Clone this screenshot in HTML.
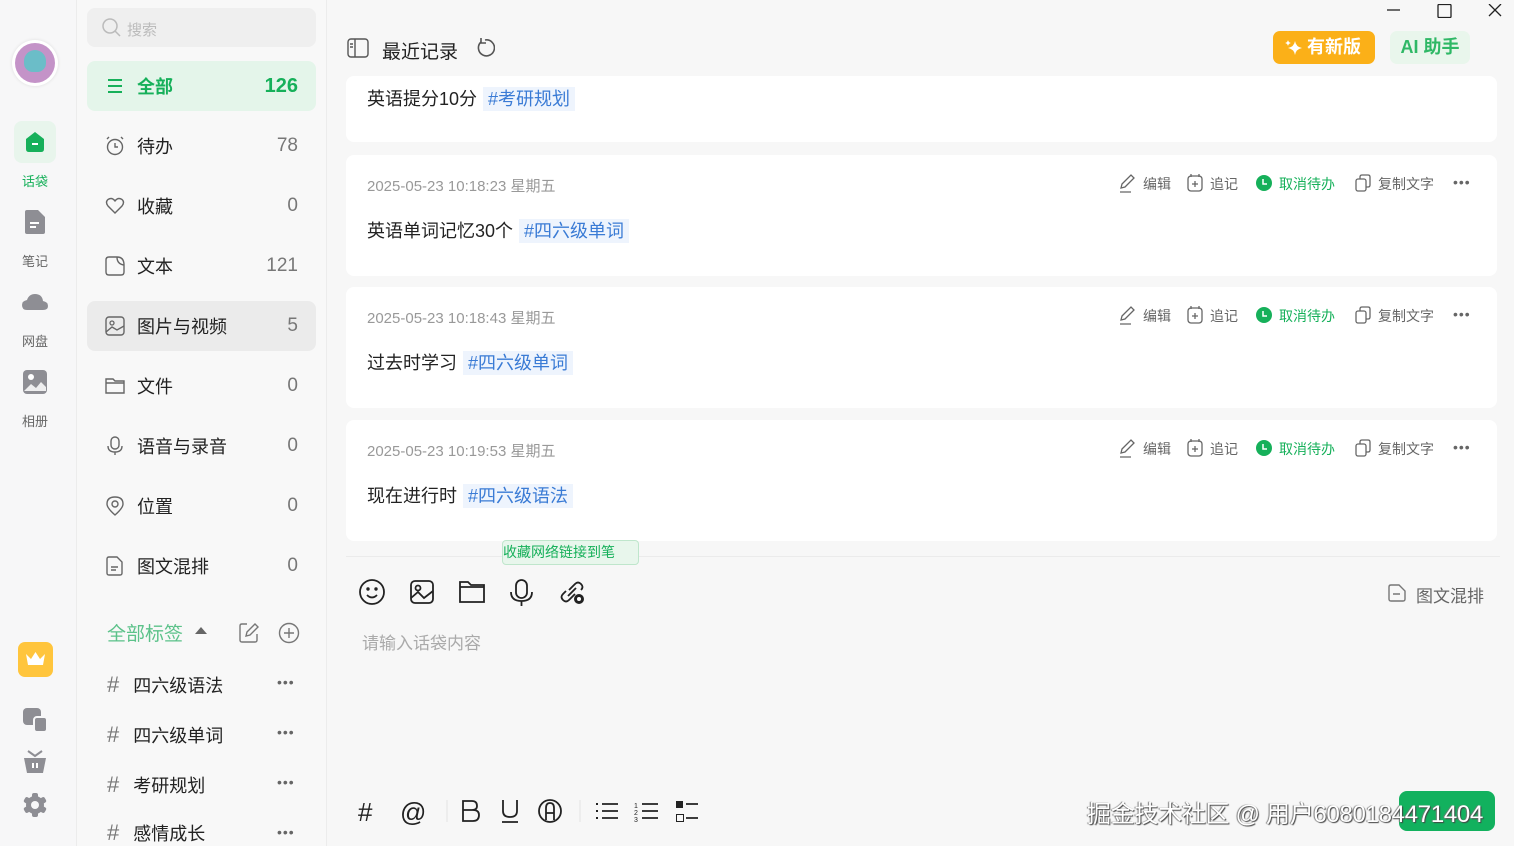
<!DOCTYPE html>
<html><head><meta charset="utf-8">
<style>
*{margin:0;padding:0;box-sizing:border-box}
body{width:1514px;height:846px;overflow:hidden;background:#f7f7f7;font-family:"Liberation Sans","Noto Sans CJK SC",sans-serif;position:relative;color:#222}
.abs{position:absolute}
.rail{left:0;top:0;width:77px;height:846px;background:#f7f7f8;border-right:1px solid #ececec}
.side{left:77px;top:0;width:250px;height:846px;background:#f8f8f8;border-right:1px solid #ececec}
.nav{position:absolute;left:87px;width:229px;height:50px;border-radius:8px;display:flex;align-items:center;padding:0 18px 0 18px;font-size:18px;color:#222}
.nav .ic{width:20px;height:20px;margin-right:12px;color:#555}
.nav .n{margin-left:auto;color:#777;font-size:19px}
.rl{position:absolute;left:0;width:70px;text-align:center;font-size:13px;color:#666}
.tag{position:absolute;left:107px;font-size:18px;color:#222}
.tag b{font-weight:normal;color:#777;font-size:22px;margin-right:14px}
.dots{position:absolute;left:277px;color:#666;font-size:14px;letter-spacing:1px}
.card{position:absolute;left:346px;width:1151px;background:#fff;border-radius:8px}
.date{position:absolute;left:21px;top:20px;font-size:15px;color:#999}
.txt{position:absolute;left:21px;top:62px;font-size:18px;color:#222}
.txt i{font-style:normal;color:#3a7bd5;background:#eef4fd;padding:2px 5px;margin-left:6px}
.tb svg{position:absolute}
.ar{position:absolute;left:1119px;font-size:14px;color:#666;white-space:nowrap}.ar span{position:absolute;top:0}
</style></head><body>
<div class="abs rail"></div>
<div class="abs side"></div>

<div class="abs" style="left:12px;top:40px;width:46px;height:46px;border-radius:50%;background:#fff;box-shadow:0 0 3px #ddd"></div>
<div class="abs" style="left:15px;top:43px;width:40px;height:40px;border-radius:50%;background:#c493c8"></div>
<div class="abs" style="left:24px;top:50px;width:22px;height:22px;border-radius:50% 50% 40% 40%;background:#6bbdc8"></div>

<div class="abs" style="left:14px;top:121px;width:42px;height:42px;border-radius:8px;background:#e8f5ec"></div>
<svg class="abs" style="left:22px;top:129px" width="26" height="26"><path d="M4 10 L13 3 L22 10 V20 Q22 23 19 23 H7 Q4 23 4 20Z" fill="#16b05a"/><rect x="10" y="14" width="6" height="2" fill="#fff"/></svg>
<div class="rl" style="top:171px;color:#16b05a">话袋</div>
<svg class="abs" style="left:24px;top:209px" width="22" height="26"><path d="M3 1 H14 L21 8 V23 Q21 25 19 25 H3 Q1 25 1 23 V3 Q1 1 3 1Z" fill="#8e8e94"/><rect x="6" y="13" width="9" height="2" fill="#fff"/><rect x="6" y="17" width="6" height="2" fill="#fff"/></svg>
<div class="rl" style="top:251px">笔记</div>
<svg class="abs" style="left:21px;top:292px" width="28" height="20"><path d="M6 18 Q1 18 1 13 Q1 9 6 8 Q8 2 14 2 Q21 2 22 9 Q27 10 27 14 Q27 18 22 18Z" fill="#8e8e94"/></svg>
<div class="rl" style="top:331px">网盘</div>
<svg class="abs" style="left:22px;top:369px" width="26" height="26"><rect x="1" y="1" width="24" height="24" rx="4" fill="#8e8e94"/><circle cx="9" cy="8" r="3" fill="#fff"/><path d="M2 22 L9 15 L14 19 L19 13 L24 18 V22Z" fill="#fff" opacity=".85"/></svg>
<div class="rl" style="top:411px">相册</div>
<div class="abs" style="left:18px;top:642px;width:35px;height:35px;border-radius:7px;background:#ffc53d"></div>
<svg class="abs" style="left:25px;top:651px" width="21" height="16"><path d="M1 3 L6 8 L10.5 1 L15 8 L20 3 L18 14 H3Z" fill="#fff"/></svg>
<svg class="abs" style="left:22px;top:707px" width="26" height="26"><rect x="1" y="1" width="18" height="17" rx="4" fill="#8e8e94"/><rect x="12" y="10" width="13" height="15" rx="3" fill="#8e8e94" stroke="#f7f7f8" stroke-width="2"/></svg>
<svg class="abs" style="left:23px;top:749px" width="24" height="26"><path d="M5 2 L12 7 L19 2" stroke="#8e8e94" stroke-width="2" fill="none"/><path d="M1 9 H23 L20 24 H4Z" fill="#8e8e94"/><rect x="9" y="14" width="2" height="5" fill="#fff"/><rect x="13" y="14" width="2" height="5" fill="#fff"/></svg>
<svg class="abs" style="left:22px;top:792px" width="26" height="26"><circle cx="13" cy="13" r="9" fill="#8e8e94"/><g fill="#8e8e94"><rect x="10" y="1" width="6" height="24" rx="2"/><rect x="10" y="1" width="6" height="24" rx="2" transform="rotate(60 13 13)"/><rect x="10" y="1" width="6" height="24" rx="2" transform="rotate(120 13 13)"/></g><circle cx="13" cy="13" r="4" fill="#f7f7f8"/></svg>

<div class="abs" style="left:87px;top:8px;width:229px;height:39px;border-radius:8px;background:#efefef"></div>
<svg class="abs" style="left:101px;top:17px" width="22" height="22"><circle cx="9" cy="9" r="7" stroke="#bbb" stroke-width="1.5" fill="none"/><path d="M14 14 L19 19" stroke="#bbb" stroke-width="1.5"/></svg>
<div class="abs" style="left:127px;top:19px;font-size:15px;color:#bbb">搜索</div>

<div class="nav" style="top:61px;background:#e4f5ea;color:#16b05a;font-weight:bold">
<svg class="ic" viewBox="0 0 20 20"><path d="M3 4H17M3 10H17M3 16H17" stroke="#16b05a" stroke-width="2"/></svg>全部<span class="n" style="color:#16b05a;font-weight:bold;font-size:20px">126</span></div>
<div class="nav" style="top:121px"><svg class="ic" viewBox="0 0 20 20"><circle cx="10" cy="11" r="7.5" stroke="#666" stroke-width="1.4" fill="none"/><path d="M10 7V11H13M2 3L4 1M18 3L16 1" stroke="#666" stroke-width="1.4" fill="none"/></svg>待办<span class="n">78</span></div>
<div class="nav" style="top:181px"><svg class="ic" viewBox="0 0 20 20"><path d="M10 17 L3 10 Q0 6 3 3.5 Q7 1 10 5 Q13 1 17 3.5 Q20 6 17 10Z" stroke="#666" stroke-width="1.4" fill="none"/></svg>收藏<span class="n">0</span></div>
<div class="nav" style="top:241px"><svg class="ic" viewBox="0 0 20 20"><path d="M4 1H12Q19 1 19 9V16Q19 19 16 19H4Q1 19 1 16V4Q1 1 4 1ZM12 1Q12 8 19 9" stroke="#666" stroke-width="1.4" fill="none"/></svg>文本<span class="n">121</span></div>
<div class="nav" style="top:301px;background:#ebebeb"><svg class="ic" viewBox="0 0 20 20"><rect x="1" y="1" width="18" height="18" rx="3" stroke="#666" stroke-width="1.4" fill="none"/><circle cx="7" cy="7" r="2" stroke="#666" stroke-width="1.3" fill="none"/><path d="M1 16 L7 11 L12 14 L19 10" stroke="#666" stroke-width="1.4" fill="none"/></svg>图片与视频<span class="n">5</span></div>
<div class="nav" style="top:361px"><svg class="ic" viewBox="0 0 20 20"><path d="M1 3H8L10 5H19V17H1ZM1 7H19" stroke="#666" stroke-width="1.4" fill="none"/></svg>文件<span class="n">0</span></div>
<div class="nav" style="top:421px"><svg class="ic" viewBox="0 0 20 20"><rect x="6" y="1" width="8" height="12" rx="4" stroke="#666" stroke-width="1.4" fill="none"/><path d="M3 10Q3 16 10 16Q17 16 17 10M10 16V19" stroke="#666" stroke-width="1.4" fill="none"/></svg>语音与录音<span class="n">0</span></div>
<div class="nav" style="top:481px"><svg class="ic" viewBox="0 0 20 20"><path d="M10 19Q2 12 2 8Q2 1 10 1Q18 1 18 8Q18 12 10 19Z" stroke="#666" stroke-width="1.4" fill="none"/><circle cx="10" cy="8" r="3" stroke="#666" stroke-width="1.4" fill="none"/></svg>位置<span class="n">0</span></div>
<div class="nav" style="top:541px"><svg class="ic" viewBox="0 0 20 20"><path d="M4 1H12L17 6V17Q17 19 15 19H4Q2 19 2 17V3Q2 1 4 1ZM6 11H13M6 14H11" stroke="#666" stroke-width="1.4" fill="none"/></svg>图文混排<span class="n">0</span></div>

<div class="abs" style="left:107px;top:619px;font-size:19px;color:#5cc28a">全部标签</div>
<div class="abs" style="left:195px;top:627px;width:0;height:0;border-left:6px solid transparent;border-right:6px solid transparent;border-bottom:7px solid #666"></div>
<svg class="abs" style="left:238px;top:622px" width="22" height="22"><path d="M9 2H4Q2 2 2 4V18Q2 20 4 20H17Q19 20 19 18V12" stroke="#777" stroke-width="1.4" fill="none"/><path d="M8 14L9 10L17 2L20 5L12 13Z" stroke="#777" stroke-width="1.4" fill="none"/></svg>
<svg class="abs" style="left:278px;top:622px" width="22" height="22"><circle cx="11" cy="11" r="9.5" stroke="#777" stroke-width="1.4" fill="none"/><path d="M11 6V16M6 11H16" stroke="#777" stroke-width="1.4"/></svg>
<div class="tag" style="top:672px"><b>#</b>四六级语法</div><div class="dots" style="top:674px">•••</div>
<div class="tag" style="top:722px"><b>#</b>四六级单词</div><div class="dots" style="top:724px">•••</div>
<div class="tag" style="top:772px"><b>#</b>考研规划</div><div class="dots" style="top:774px">•••</div>
<div class="tag" style="top:820px"><b>#</b>感情成长</div><div class="dots" style="top:824px">•••</div>

<div class="card" style="top:76px;height:66px"><div class="txt" style="top:9px">英语提分10分<i>#考研规划</i></div></div>
<div class="card" style="top:155px;height:121px"><div class="date">2025-05-23 10:18:23 星期五</div><div class="txt">英语单词记忆30个<i>#四六级单词</i></div></div>
<div class="card" style="top:287px;height:121px"><div class="date">2025-05-23 10:18:43 星期五</div><div class="txt">过去时学习<i>#四六级单词</i></div></div>
<div class="card" style="top:420px;height:121px"><div class="date">2025-05-23 10:19:53 星期五</div><div class="txt">现在进行时<i>#四六级语法</i></div></div>

<svg class="abs" style="left:347px;top:38px" width="22" height="20"><rect x="1" y="1" width="20" height="18" rx="3" stroke="#555" stroke-width="1.4" fill="none"/><path d="M8 1V19M3 6H6M3 9H6" stroke="#555" stroke-width="1.4"/></svg>
<div class="abs" style="left:382px;top:37px;font-size:19px;color:#222">最近记录</div>
<svg class="abs" style="left:475px;top:38px" width="20" height="20"><path d="M6 4A8 8 0 1 0 10 2" stroke="#555" stroke-width="1.6" fill="none"/><path d="M6 0V5H11" stroke="#555" stroke-width="1.6" fill="none"/></svg>
<svg class="abs" style="left:1385px;top:4px" width="120" height="14"><path d="M2 6H15" stroke="#222" stroke-width="1.3"/><rect x="53" y="0.5" width="13" height="13" rx="1" stroke="#222" stroke-width="1.3" fill="none"/><path d="M104 0L116 12M116 0L104 12" stroke="#222" stroke-width="1.3"/></svg>
<div class="abs" style="left:1273px;top:31px;width:102px;height:33px;border-radius:7px;background:#fbb018;color:#fff;font-size:18px;font-weight:bold;line-height:33px;padding-left:34px">有新版</div>
<svg class="abs" style="left:1284px;top:38px" width="20" height="20"><path d="M11 3Q12 9 18 10Q12 11 11 17Q10 11 4 10Q10 9 11 3Z" fill="#fff"/><path d="M4 2Q4.5 4.5 7 5Q4.5 5.5 4 8Q3.5 5.5 1 5Q3.5 4.5 4 2Z" fill="#fff"/></svg>
<div class="abs" style="left:1390px;top:31px;width:80px;height:33px;border-radius:7px;background:#e9f6ec;font-size:18px;font-weight:bold;line-height:33px;text-align:center;color:#2fb866">AI 助手</div>

<div class="abs" style="left:346px;top:556px;width:1154px;height:1px;background:#ebebeb"></div>
<div class="abs" style="left:502px;top:540px;width:137px;height:25px;border:1px solid #bfe6cc;background:#e8f6ec;border-radius:4px;font-size:14px;color:#16b05a;line-height:22px">收藏网络链接到笔</div>

<svg class="abs tb" style="left:0;top:0" width="1514" height="846">
<g stroke="#222" stroke-width="1.8" fill="none">
<circle cx="372" cy="592" r="12"/><path d="M367 595Q372 600 377 595"/><circle cx="368" cy="589" r=".8" fill="#222"/><circle cx="376" cy="589" r=".8" fill="#222"/>
<rect x="411" y="581" width="22" height="22" rx="4"/><circle cx="418" cy="588" r="2.5"/><path d="M411 598L418 592L424 598L433 591"/>
<path d="M460 582H468L471 585H484V602H460ZM460 587H484"/>
<rect x="516" y="580" width="11" height="18" rx="5.5"/><path d="M511 592Q511 601 521.5 601Q532 601 532 592M521.5 601V606"/>
<path d="M569 590L575 584Q578 581 581 584Q584 587 581 590M575 594L569 600Q566 603 563 600Q560 597 563 594L566 591M568 596L576 588"/>
</g>
<circle cx="579" cy="599" r="5" fill="#222"/><circle cx="579" cy="599" r="2" fill="#fff"/>
<text x="358" y="821" font-size="26" fill="#222" font-family="Liberation Sans">#</text>
<text x="400" y="821" font-size="26" fill="#222" font-family="Liberation Sans">@</text>
<path d="M447 800V822M580 800V822" stroke="#e3e3e3"/>
<path d="M463 801H472Q477 801 477 806Q477 810 472 810H463ZM463 810H473Q479 810 479 815Q479 821 473 821H463Z" stroke="#222" stroke-width="1.8" fill="none"/>
<path d="M503 800V811Q503 817 510 817Q517 817 517 811V800M502 822H518" stroke="#222" stroke-width="1.8" fill="none"/>
<circle cx="550" cy="811" r="11" stroke="#222" stroke-width="1.8" fill="none"/><path d="M546 820V808Q546 803 550 803Q554 803 554 808V820M546 813H554" stroke="#222" stroke-width="1.8" fill="none"/>
<g stroke="#222" stroke-width="1.8"><path d="M602 804H618M602 811H618M602 818H618M642 804H658M642 811H658M642 818H658M686 804H698M686 818H698"/></g>
<g fill="#222"><rect x="596" y="803" width="2" height="2"/><rect x="596" y="810" width="2" height="2"/><rect x="596" y="817" width="2" height="2"/><rect x="676" y="801" width="7" height="7"/></g>
<rect x="676.5" y="814.5" width="7" height="7" stroke="#222" fill="none"/>
<text x="634" y="808" font-size="7" fill="#222">1</text><text x="634" y="815" font-size="7" fill="#222">2</text><text x="634" y="822" font-size="7" fill="#222">3</text>
<path d="M1391 585H1399L1405 591V599Q1405 601 1403 601H1391Q1389 601 1389 599V587Q1389 585 1391 585ZM1393 594H1400" stroke="#777" stroke-width="1.4" fill="none"/>
</svg>
<div class="abs" style="left:1416px;top:582px;font-size:17px;color:#666">图文混排</div>
<div class="abs" style="left:362px;top:629px;font-size:17px;color:#aaa">请输入话袋内容</div>
<div class="abs" style="left:1399px;top:791px;width:96px;height:40px;border-radius:8px;background:#12b15e"></div>
<div class="abs" style="left:1087px;top:794px;font-size:24px;letter-spacing:-0.3px;color:#fff;text-shadow:1px 1px 1px #444,-1px 0 1px #777;white-space:nowrap">掘金技术社区 @ 用户6080184471404</div>

<div class="ar" style="top:174px"><svg width="360" height="20" class="abs" style="left:0;top:0"><g stroke="#666" stroke-width="1.3" fill="none"><path d="M2 14L3 10L12 1L15 4L6 13ZM1 18H12"/><rect x="69" y="2" width="14" height="15" rx="3"/><path d="M72 0V3M80 0V3M76 7V13M73 10H79"/><rect x="237" y="5" width="10" height="12" rx="2"/><path d="M241 5V3Q241 1 243 1H249Q251 1 251 3V11Q251 13 249 13H247"/></g><circle cx="145" cy="9" r="8" fill="#16b05a"/><path d="M144 5V10H148" stroke="#fff" stroke-width="1.5" fill="none"/></svg>
<span style="left:24px">编辑</span><span style="left:91px">追记</span><span style="left:160px;color:#16b05a">取消待办</span><span style="left:259px">复制文字</span><span style="left:334px;letter-spacing:1px">•••</span></div>
<div class="ar" style="top:306px"><svg width="360" height="20" class="abs" style="left:0;top:0"><g stroke="#666" stroke-width="1.3" fill="none"><path d="M2 14L3 10L12 1L15 4L6 13ZM1 18H12"/><rect x="69" y="2" width="14" height="15" rx="3"/><path d="M72 0V3M80 0V3M76 7V13M73 10H79"/><rect x="237" y="5" width="10" height="12" rx="2"/><path d="M241 5V3Q241 1 243 1H249Q251 1 251 3V11Q251 13 249 13H247"/></g><circle cx="145" cy="9" r="8" fill="#16b05a"/><path d="M144 5V10H148" stroke="#fff" stroke-width="1.5" fill="none"/></svg>
<span style="left:24px">编辑</span><span style="left:91px">追记</span><span style="left:160px;color:#16b05a">取消待办</span><span style="left:259px">复制文字</span><span style="left:334px;letter-spacing:1px">•••</span></div>
<div class="ar" style="top:439px"><svg width="360" height="20" class="abs" style="left:0;top:0"><g stroke="#666" stroke-width="1.3" fill="none"><path d="M2 14L3 10L12 1L15 4L6 13ZM1 18H12"/><rect x="69" y="2" width="14" height="15" rx="3"/><path d="M72 0V3M80 0V3M76 7V13M73 10H79"/><rect x="237" y="5" width="10" height="12" rx="2"/><path d="M241 5V3Q241 1 243 1H249Q251 1 251 3V11Q251 13 249 13H247"/></g><circle cx="145" cy="9" r="8" fill="#16b05a"/><path d="M144 5V10H148" stroke="#fff" stroke-width="1.5" fill="none"/></svg>
<span style="left:24px">编辑</span><span style="left:91px">追记</span><span style="left:160px;color:#16b05a">取消待办</span><span style="left:259px">复制文字</span><span style="left:334px;letter-spacing:1px">•••</span></div>
</body></html>
